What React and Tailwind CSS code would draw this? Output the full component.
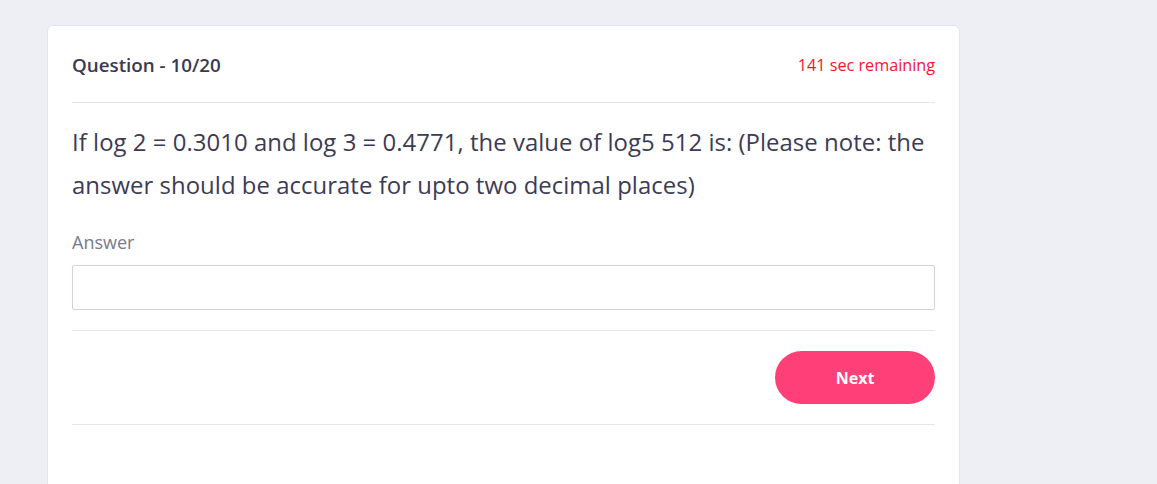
export default function App() {
  return (
    <div className="min-h-[484px] w-full bg-[#eeeff5] pt-[25px] pl-[47px]" style={{ fontFamily: "'Open Sans', 'Noto Sans', sans-serif" }}>
      <div className="w-[913px] min-h-[459px] rounded-t-[6px] bg-white border border-[#e4e4f0] border-b-0 px-[24px]">
        <div className="h-[77px] flex items-center justify-between border-b border-[#e6e6ea] pt-[3px]">
          <span className="text-[18.8px] font-semibold text-[#3a3952]">Question - 10/20</span>
          <span className="text-[16.2px] text-[#f5142d]">141 sec remaining</span>
        </div>
        <p className="mt-[17px] text-[23.9px] leading-[43px] text-[#3c3b55] tracking-[0.05px]">
          If log 2 = 0.3010 and log 3 = 0.4771, the value of log5 512 is: (Please note: the answer should be accurate for upto two decimal places)
        </p>
        <div className="mt-[24px] text-[18px] leading-[24px] font-medium text-[#767a8c]">Answer</div>
        <input className="mt-[11px] block w-full h-[45px] border border-[#d3d3e0] rounded-[2px] outline-none px-3" />
        <div className="mt-[20px] border-t border-[#e6e6ea]"></div>
        <div className="flex justify-end pt-[20px] pb-[20px] border-b border-[#e6e6ea]">
          <button className="w-[160px] h-[53px] rounded-full bg-[#ff3f78] text-white text-[16px] font-bold">Next</button>
        </div>
      </div>
    </div>
  );
}
